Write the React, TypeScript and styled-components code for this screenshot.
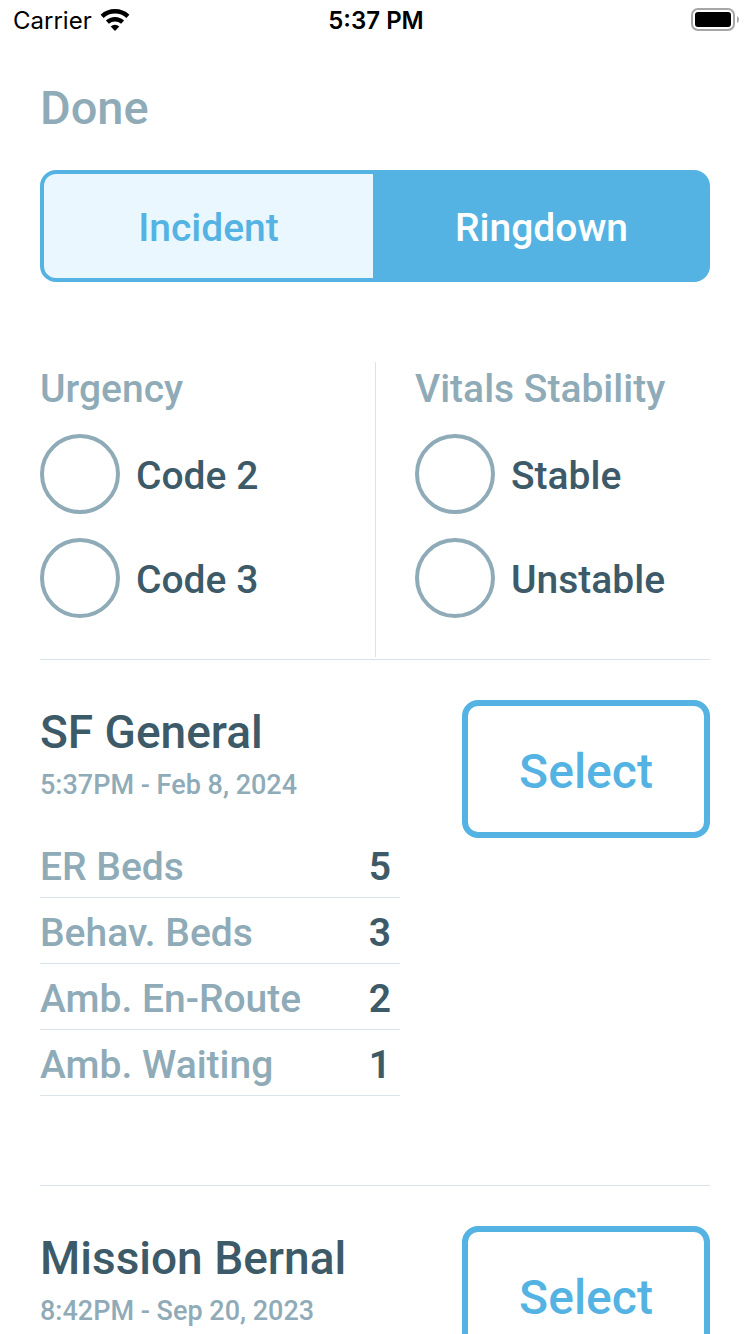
import React, { useState } from "react";
import styled, { createGlobalStyle } from "styled-components";

const color = {
  blue: "#54b3e2",
  lightBlue: "#ebf7fe",
  muted: "#8fabb8",
  dark: "#3d5a68",
  line: "#d9e3e9",
};

const GlobalStyle = createGlobalStyle`
  *, *::before, *::after { box-sizing: border-box; }
  body {
    margin: 0;
    background: #fff;
    color: ${color.dark};
    font-family: Roboto, "Liberation Sans", sans-serif;
    font-weight: 500;
  }
  button { font: inherit; cursor: pointer; }
`;

const Screen = styled.div`
  height: 100vh;
  overflow: hidden auto;
  scrollbar-width: none;
`;

const StatusBar = styled.header`
  display: grid;
  grid-template-columns: 1fr auto 1fr;
  align-items: center;
  height: 40px;
  padding: 0 11px 0 13px;
  color: #000;
  font-family: Inter, sans-serif;
  font-size: 24px;
`;

const Carrier = styled.div`
  display: flex;
  align-items: center;
  gap: 8px;
  font-weight: 400;
`;

const Clock = styled.time`
  font-weight: 600;
`;

const BatteryIcon = styled.svg`
  justify-self: end;
`;

const Content = styled.main`
  padding: 40px 40px 0;
`;

const DoneButton = styled.button`
  display: block;
  padding: 0;
  border: 0;
  background: none;
  color: ${color.muted};
  font-size: 47px;
  line-height: 56px;
`;

const Segments = styled.div`
  display: flex;
  margin-top: 34px;
`;

const Segment = styled.button<{ $active: boolean }>`
  flex: 1 1 0;
  height: 112px;
  padding: 4px 0 0;
  border: 4px solid ${color.blue};
  background: ${(p) => (p.$active ? color.blue : color.lightBlue)};
  color: ${(p) => (p.$active ? "#fff" : color.blue)};
  font-size: 39px;

  &:first-child {
    border-radius: 16px 0 0 16px;
  }
  &:last-child {
    margin-left: -4px;
    border-radius: 0 16px 16px 0;
  }
`;

const Triage = styled.form`
  display: grid;
  grid-template-columns: 1fr 1fr;
  margin-top: 80px;
  padding-bottom: 2px;
  border-bottom: 1px solid ${color.line};
`;

const Column = styled.div`
  padding-bottom: 39px;

  & + & {
    padding-left: 39px;
    border-left: 1px solid ${color.line};
  }
`;

const Group = styled.fieldset`
  display: flex;
  flex-direction: column;
  gap: 24px;
  min-width: 0;
  margin: 0;
  padding: 0;
  border: 0;
`;

const GroupTitle = styled.legend`
  margin-bottom: 18px;
  padding: 0;
  color: ${color.muted};
  font-size: 39px;
  line-height: 54px;
  white-space: nowrap;
`;

const Option = styled.label`
  display: flex;
  align-items: center;
  gap: 16px;
  height: 80px;
  font-size: 39px;
  cursor: pointer;
`;

const OptionText = styled.span`
  padding-top: 4px;
`;

const Radio = styled.input`
  appearance: none;
  flex: none;
  width: 80px;
  height: 80px;
  margin: 0;
  border: 4px solid ${color.muted};
  border-radius: 50%;
  background: #fff;

  &:checked {
    box-shadow: inset 0 0 0 12px #fff;
    background: ${color.blue};
  }
`;

const Hospital = styled.article`
  display: grid;
  grid-template-columns: 1fr 248px;
  column-gap: 62px;
  align-items: start;
  padding: 40px 0 89px;
  border-bottom: 1px solid ${color.line};

  &:last-child {
    border-bottom: 0;
  }
`;

const HospitalName = styled.h2`
  margin: 0;
  font-size: 46px;
  font-weight: 500;
  line-height: 64px;
  white-space: nowrap;
`;

const Updated = styled.p`
  margin: 0;
  color: ${color.muted};
  font-size: 27px;
  line-height: 42px;
  white-space: nowrap;
`;

const Stats = styled.table`
  width: 100%;
  margin-top: 26px;
  border-collapse: separate;
  border-spacing: 0;
  font-size: 39px;
  line-height: 60px;
`;

const StatName = styled.th`
  padding: 5px 0 0;
  border-bottom: 1px solid ${color.line};
  color: ${color.muted};
  font-weight: 500;
  text-align: left;
  white-space: nowrap;
`;

const StatValue = styled.td`
  padding: 5px 9px 0 0;
  border-bottom: 1px solid ${color.line};
  font-weight: 600;
  text-align: right;
`;

const SelectButton = styled.button`
  height: 138px;
  padding: 4px 0 0;
  border: 6px solid ${color.blue};
  border-radius: 16px;
  background: #fff;
  color: ${color.blue};
  font-size: 48px;
`;

const groups = [
  { title: "Urgency", name: "urgency", options: ["Code 2", "Code 3"] },
  { title: "Vitals Stability", name: "stability", options: ["Stable", "Unstable"] },
];

const hospitals: { name: string; updated: string; stats: [string, number][] }[] = [
  {
    name: "SF General",
    updated: "5:37PM - Feb 8, 2024",
    stats: [
      ["ER Beds", 5],
      ["Behav. Beds", 3],
      ["Amb. En-Route", 2],
      ["Amb. Waiting", 1],
    ],
  },
  { name: "Mission Bernal", updated: "8:42PM - Sep 20, 2023", stats: [] },
];

const tabs = ["Incident", "Ringdown"];

export default function App() {
  const [tab, setTab] = useState("Ringdown");

  return (
    <Screen>
      <GlobalStyle />
      <StatusBar>
        <Carrier>
          <span>Carrier</span>
          <svg width="30" height="22" viewBox="0 0 30 22" aria-hidden="true">
            <g fill="none" stroke="#000" strokeWidth="4.4">
              <path d="M2.1 7.3A19.2 19.2 0 0 1 27.9 7.3" />
              <path d="M7.4 13.2A11.3 11.3 0 0 1 22.6 13.2" />
            </g>
            <path d="M15 22L10.7 17.6A6 6 0 0 1 19.3 17.6Z" />
          </svg>
        </Carrier>
        <Clock>5:37 PM</Clock>
        <BatteryIcon width="48" height="24" viewBox="0 0 48 24" aria-hidden="true">
          <rect x="1" y="1" width="42" height="21" rx="6" fill="none" stroke="#a6a6a6" strokeWidth="2" />
          <rect x="4" y="4" width="36" height="15" rx="3" />
          <path d="M46 8Q48 9 48 11.5T46 15Z" fill="#a6a6a6" />
        </BatteryIcon>
      </StatusBar>
      <Content>
        <DoneButton type="button">Done</DoneButton>
        <Segments>
          {tabs.map((t) => (
            <Segment key={t} type="button" $active={t === tab} aria-pressed={t === tab} onClick={() => setTab(t)}>
              {t}
            </Segment>
          ))}
        </Segments>
        <Triage>
          {groups.map((g) => (
            <Column key={g.name}>
              <Group>
                <GroupTitle>{g.title}</GroupTitle>
                {g.options.map((o) => (
                  <Option key={o}>
                    <Radio type="radio" name={g.name} value={o} />
                    <OptionText>{o}</OptionText>
                  </Option>
                ))}
              </Group>
            </Column>
          ))}
        </Triage>
        {hospitals.map((h) => (
          <Hospital key={h.name}>
            <div>
              <HospitalName>{h.name}</HospitalName>
              <Updated>{h.updated}</Updated>
              {h.stats.length > 0 && (
                <Stats>
                  <tbody>
                    {h.stats.map(([label, value]) => (
                      <tr key={label}>
                        <StatName scope="row">{label}</StatName>
                        <StatValue>{value}</StatValue>
                      </tr>
                    ))}
                  </tbody>
                </Stats>
              )}
            </div>
            <SelectButton type="button">Select</SelectButton>
          </Hospital>
        ))}
      </Content>
    </Screen>
  );
}
